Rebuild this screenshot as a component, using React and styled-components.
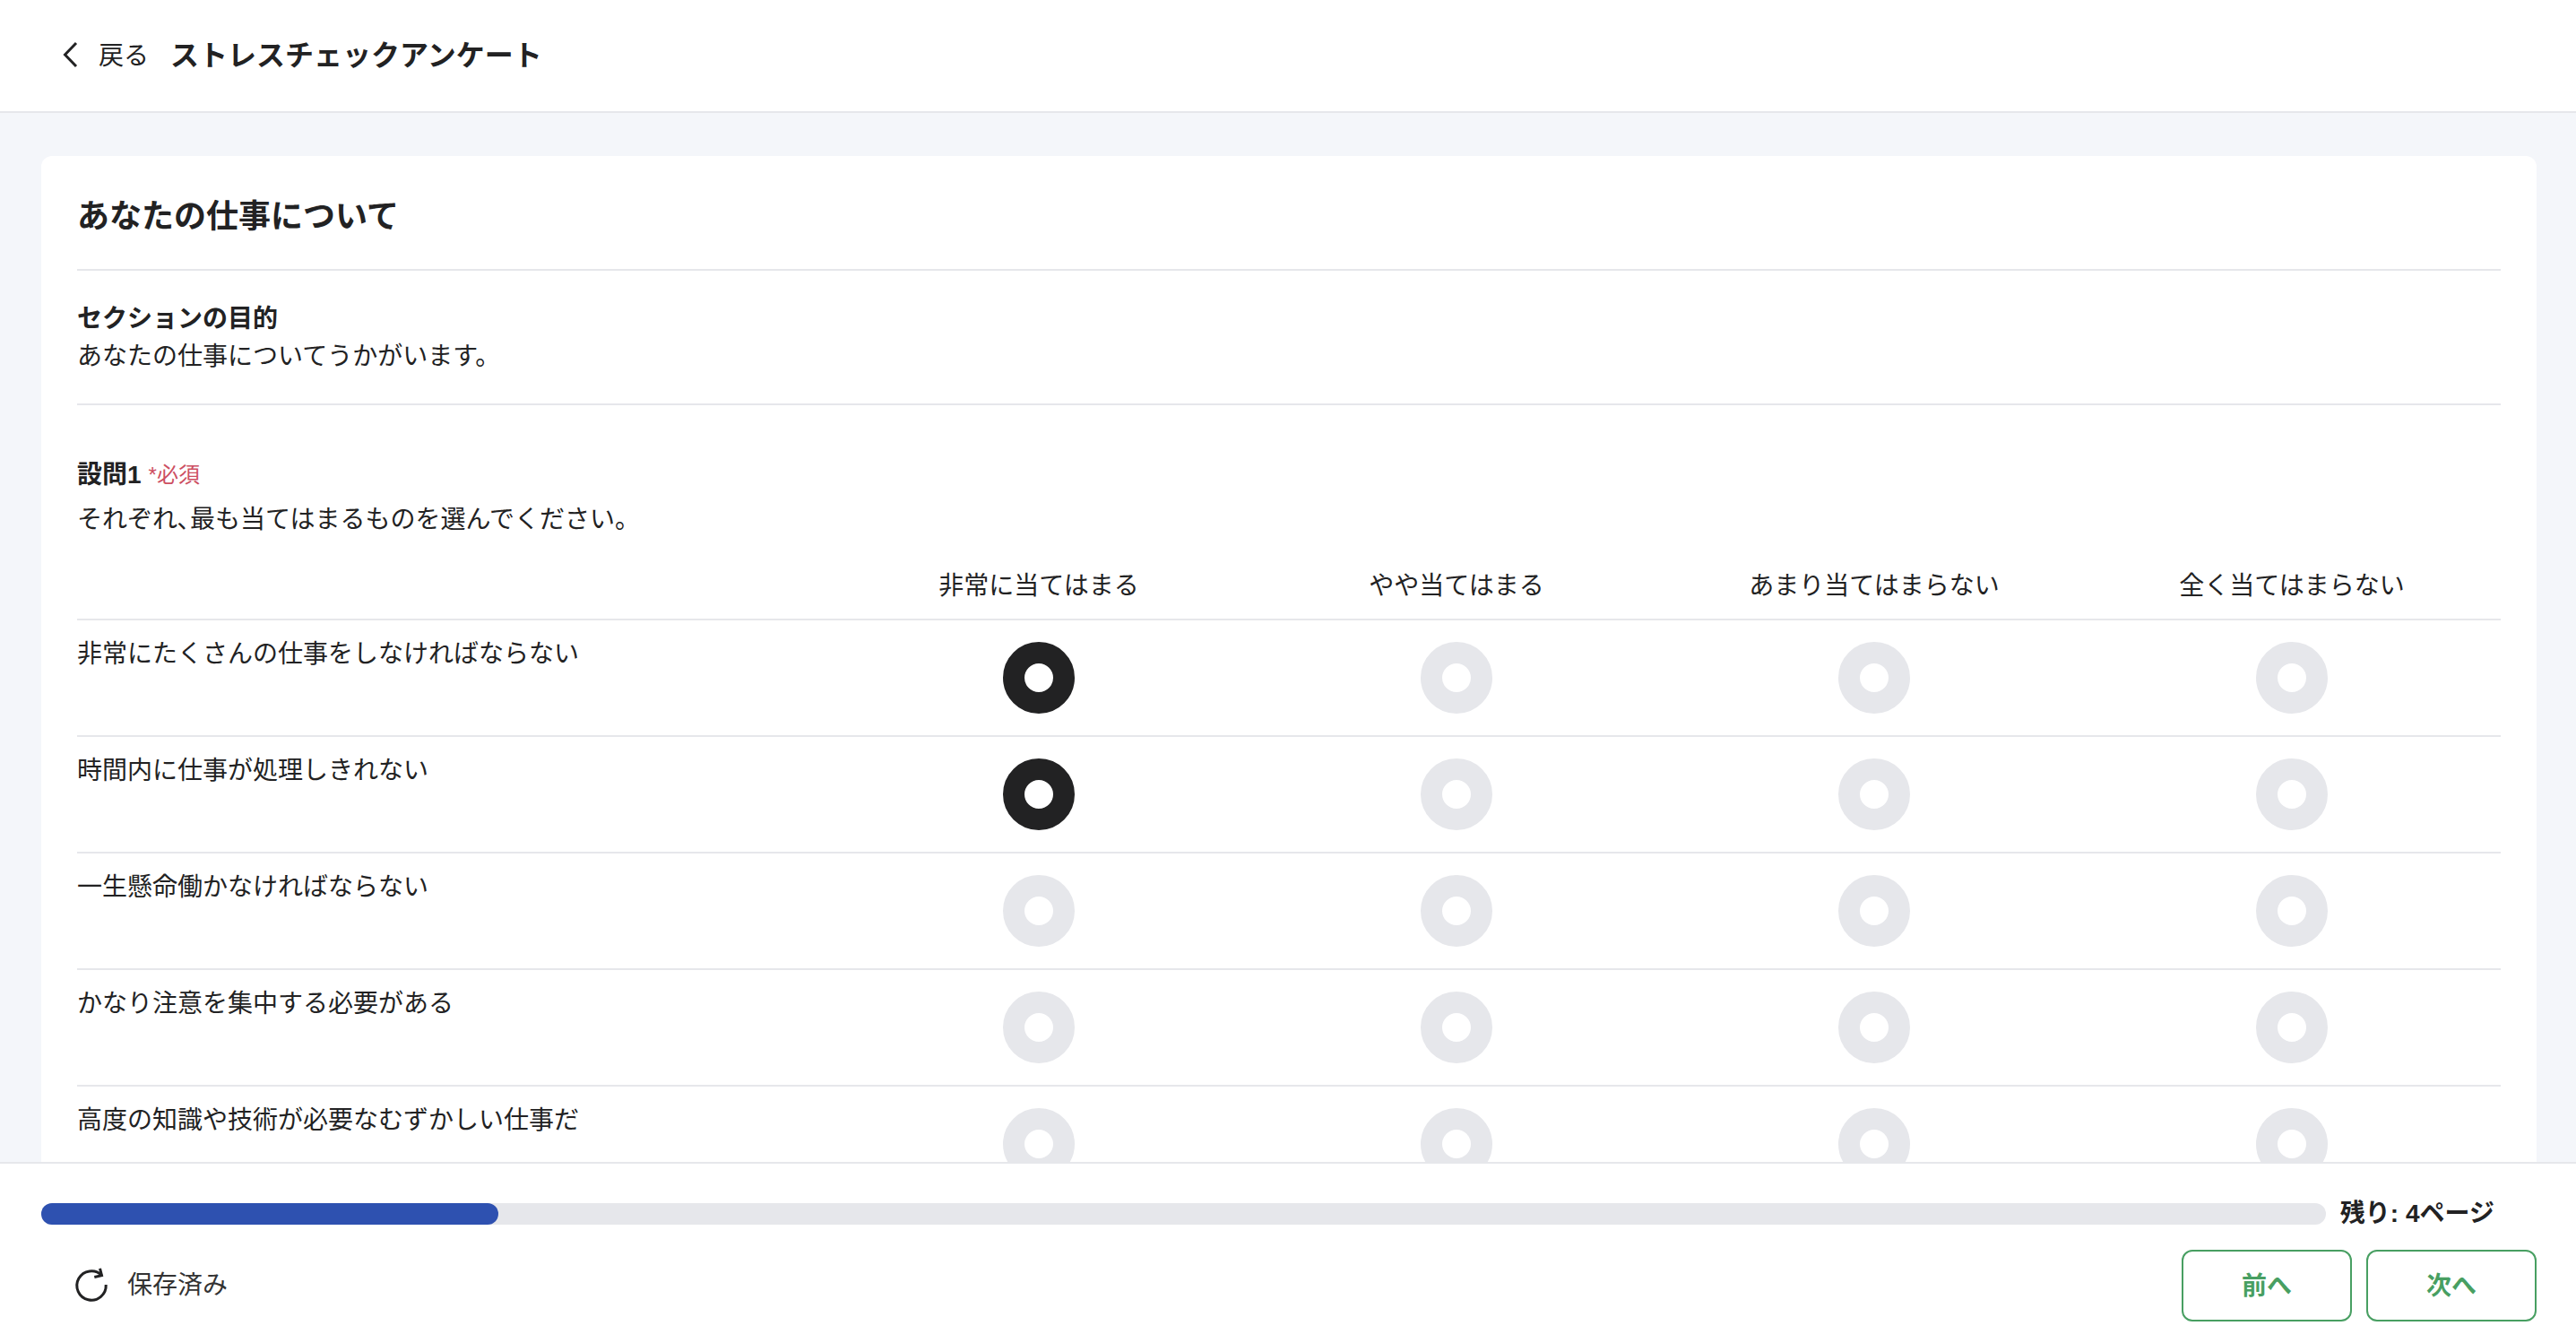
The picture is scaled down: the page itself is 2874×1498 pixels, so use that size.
import React, { useState } from "react";
import styled, { createGlobalStyle } from "styled-components";

const GlobalStyle = createGlobalStyle`
  * {
    box-sizing: border-box;
  }

  body {
    margin: 0;
    background-color: #f4f6fa;
    color: #222223;
    font-family: "Liberation Sans", "Noto Sans CJK JP", sans-serif;
    font-size: 28px;
    line-height: 42px;
  }

  button,
  input {
    font: inherit;
    color: inherit;
  }
`;

// Page frame
const Page = styled.div`
  display: flex;
  flex-direction: column;
  height: 100vh;
  overflow: hidden;
`;

const Header = styled.header`
  display: flex;
  align-items: center;
  flex-shrink: 0;
  gap: 24px;
  padding: 41px 64px;
  background-color: white;
  border-bottom: 2px solid #e6e7eb;
`;

const BackButton = styled.button`
  display: flex;
  align-items: center;
  gap: 20px;
  padding: 2px 0 0;
  border: none;
  background: none;
  line-height: 40px;
  cursor: pointer;
`;

const PageTitle = styled.h1`
  margin: 0;
  font-size: 32px;
  font-weight: 700;
  line-height: 42px;
`;

const Content = styled.main`
  flex: 1;
  min-height: 0;
  overflow: hidden;
  padding: 48px 44px 0 46px;
`;

// Survey card
const Card = styled.section`
  padding: 40px;
  background-color: white;
  border-radius: 12px;
`;

const SectionTitle = styled.h2`
  margin: 0;
  padding: 1px 0 31px;
  border-bottom: 2px solid #e6e7eb;
  font-size: 36px;
  font-weight: 700;
  line-height: 54px;
`;

const Purpose = styled.div`
  padding: 33px 0 31px;
  border-bottom: 2px solid #e6e7eb;
`;

const Heading = styled.h3`
  margin: 0;
  font-size: 28px;
  font-weight: 700;
`;

const Text = styled.p`
  margin: 0;
`;

const Question = styled.div`
  display: flex;
  flex-direction: column;
  gap: 8px;
  padding: 57px 0 16px;
`;

const QuestionHeader = styled.div`
  display: flex;
  align-items: center;
  gap: 8px;
`;

const Required = styled.span`
  color: #cd4f62;
  font-size: 24px;
`;

// Answer matrix
const Matrix = styled.table`
  width: 100%;
  table-layout: fixed;
  border-collapse: separate;
  border-spacing: 0;
`;

const LabelColumn = styled.col`
  width: 840px;
`;

const OptionHead = styled.th`
  padding: 16px 0 15px;
  font-weight: 400;
  text-align: center;
`;

const ItemHead = styled.th`
  padding: 17px 0 15px;
  border-top: 2px solid #e6e7eb;
  font-weight: 400;
  text-align: left;
  vertical-align: top;
`;

const AnswerCell = styled.td`
  padding: 24px 0;
  border-top: 2px solid #e6e7eb;
`;

const Radio = styled.input`
  appearance: none;
  display: block;
  width: 80px;
  height: 80px;
  margin: 0 auto;
  border: 24px solid #e6e7eb;
  border-radius: 50%;
  background-color: white;
  cursor: pointer;

  &:checked {
    border-color: #222223;
  }
`;

// Footer
const Footer = styled.footer`
  display: flex;
  flex-direction: column;
  flex-shrink: 0;
  gap: 19px;
  padding: 35px 44px 24px 46px;
  background-color: white;
  border-top: 2px solid #e6e7eb;
`;

const ProgressRow = styled.div`
  display: flex;
  align-items: center;
  gap: 16px;
`;

const Track = styled.div`
  flex: 1;
  height: 24px;
  border-radius: 12px;
  background-color: #e6e7eb;
`;

const Fill = styled.div`
  height: 100%;
  border-radius: 12px;
  background-color: #2e51b0;
`;

const Remaining = styled.span`
  padding-right: 47px;
  font-weight: 700;
`;

const ActionRow = styled.div`
  display: flex;
  align-items: center;
  justify-content: space-between;
`;

const SaveStatus = styled.div`
  display: flex;
  align-items: center;
  gap: 20px;
  padding-left: 36px;
  color: #333333;
`;

const PageButtons = styled.div`
  display: flex;
  gap: 16px;
`;

const PageButton = styled.button`
  width: 190px;
  height: 80px;
  padding: 2px 0 0;
  border: 2px solid #489f62;
  border-radius: 12px;
  background-color: white;
  color: #489f62;
  font-weight: 700;
  cursor: pointer;
`;

const OPTIONS = [
  "非常に当てはまる",
  "やや当てはまる",
  "あまり当てはまらない",
  "全く当てはまらない",
];

const ITEMS = [
  "非常にたくさんの仕事をしなければならない",
  "時間内に仕事が処理しきれない",
  "一生懸命働かなければならない",
  "かなり注意を集中する必要がある",
  "高度の知識や技術が必要なむずかしい仕事だ",
];

const TOTAL_PAGES = 5;

const BackIcon = () => (
  <svg width="26" height="40" viewBox="0 0 26 40" fill="none" aria-hidden="true">
    <path d="M21 5 L8.5 18 L21 31" stroke="#222223" strokeWidth="3" />
  </svg>
);

const SavedIcon = () => (
  <svg width="40" height="40" viewBox="0 0 40 40" fill="none" aria-hidden="true">
    <path
      d="M31.5 8.5 A16.2 16.2 0 1 0 36.2 19"
      stroke="#222223"
      strokeWidth="3"
    />
    <path d="M29.5 0.8 L31.5 8.6 L23.3 10.5" stroke="#222223" strokeWidth="3" />
  </svg>
);

const App = () => {
  const [page, setPage] = useState(1);
  const [answers, setAnswers] = useState({ 0: 0, 1: 0 });

  // Save the chosen option for one item
  const handleAnswer = (item, option) => {
    setAnswers((prev) => ({ ...prev, [item]: option }));
  };

  return (
    <Page>
      <GlobalStyle />
      <Header>
        <BackButton type="button">
          <BackIcon />
          戻る
        </BackButton>
        <PageTitle>ストレスチェックアンケート</PageTitle>
      </Header>

      <Content>
        <Card>
          <SectionTitle>あなたの仕事について</SectionTitle>
          <Purpose>
            <Heading>セクションの目的</Heading>
            <Text>あなたの仕事についてうかがいます。</Text>
          </Purpose>

          <Question>
            <QuestionHeader>
              <Heading>設問1</Heading>
              <Required>*必須</Required>
            </QuestionHeader>
            <Text>それぞれ､最も当てはまるものを選んでください。</Text>
          </Question>

          <Matrix>
            <colgroup>
              <LabelColumn />
              {OPTIONS.map((option) => (
                <col key={option} />
              ))}
            </colgroup>
            <thead>
              <tr>
                <td />
                {OPTIONS.map((option) => (
                  <OptionHead key={option} scope="col">
                    {option}
                  </OptionHead>
                ))}
              </tr>
            </thead>
            <tbody>
              {ITEMS.map((item, row) => (
                <tr key={item}>
                  <ItemHead scope="row">{item}</ItemHead>
                  {OPTIONS.map((option, col) => (
                    <AnswerCell key={option}>
                      <Radio
                        type="radio"
                        name={`item-${row}`}
                        aria-label={`${item} ${option}`}
                        checked={answers[row] === col}
                        onChange={() => handleAnswer(row, col)}
                      />
                    </AnswerCell>
                  ))}
                </tr>
              ))}
            </tbody>
          </Matrix>
        </Card>
      </Content>

      <Footer>
        <ProgressRow>
          <Track>
            <Fill style={{ width: `${(page / TOTAL_PAGES) * 100}%` }} />
          </Track>
          <Remaining>残り: {TOTAL_PAGES - page}ページ</Remaining>
        </ProgressRow>
        <ActionRow>
          <SaveStatus>
            <SavedIcon />
            保存済み
          </SaveStatus>
          <PageButtons>
            <PageButton
              type="button"
              onClick={() => setPage(Math.max(1, page - 1))}
            >
              前へ
            </PageButton>
            <PageButton
              type="button"
              onClick={() => setPage(Math.min(TOTAL_PAGES, page + 1))}
            >
              次へ
            </PageButton>
          </PageButtons>
        </ActionRow>
      </Footer>
    </Page>
  );
};

export default App;
